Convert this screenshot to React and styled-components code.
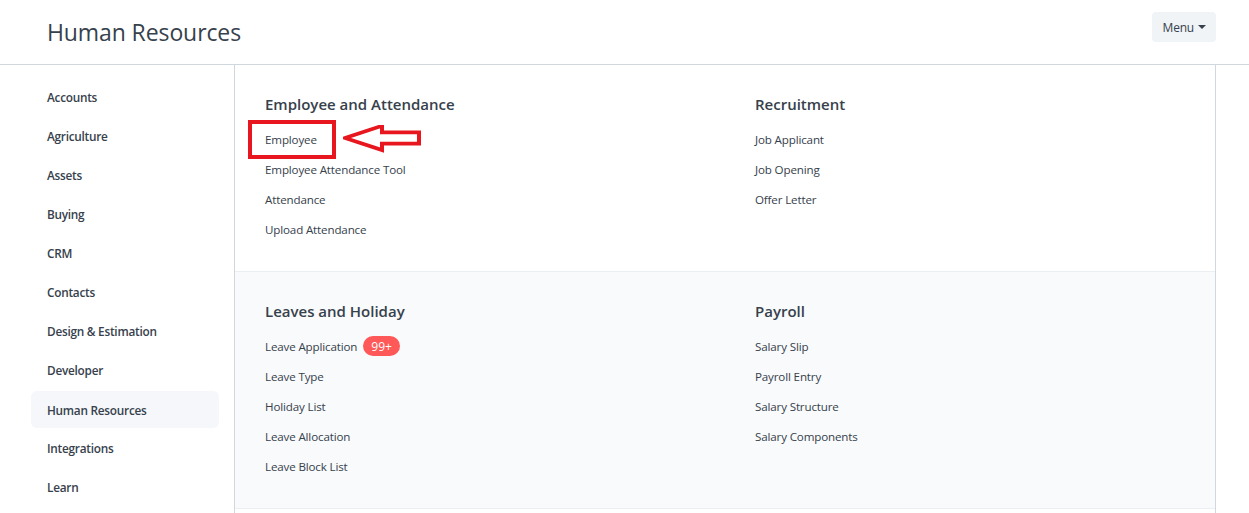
import React from "react";
import styled, { createGlobalStyle } from "styled-components";

const Global = createGlobalStyle`
  html, body { margin: 0; padding: 0; background: #fff; }
  body { font-family: "Open Sans", "Noto Sans", sans-serif; color: #36414c; }
  * { box-sizing: border-box; }
`;

const Page = styled.div`
  width: 1249px;
  height: 513px;
  overflow: hidden;
`;

const Header = styled.header`
  height: 65px;
  border-bottom: 1px solid #d1d8dd;
  padding: 0 33px 0 47px;
  display: flex;
  align-items: center;
  justify-content: space-between;
`;

const Title = styled.h1`
  margin: 0;
  font-size: 23px;
  font-weight: 500;
  color: #36414c;
  letter-spacing: -0.1px;
`;

const MenuButton = styled.button`
  height: 30px;
  padding: 0 10px 0 11px;
  border: none;
  border-radius: 4px;
  background: #f0f4f7;
  color: #36414c;
  font-family: inherit;
  font-size: 12px;
  letter-spacing: -0.2px;
  display: flex;
  align-items: center;
  gap: 4px;
  margin-top: -10px;
`;

const Caret = styled.span`
  width: 0;
  height: 0;
  border-left: 4px solid transparent;
  border-right: 4px solid transparent;
  border-top: 4px solid #36414c;
`;

const Body = styled.div`
  display: flex;
  padding-left: 31px;
  gap: 15px;
`;

const Sidebar = styled.nav`
  width: 188px;
  padding-top: 13px;
  display: flex;
  flex-direction: column;
  gap: 2px;
`;

const SideItem = styled.div`
  height: 37px;
  padding-left: 16px;
  display: flex;
  align-items: center;
  font-size: 11.8px;
  letter-spacing: -0.25px;
  font-weight: 600;
  color: #36414c;
  border-radius: 6px;
  background: ${(p) => (p.$active ? "#f5f7fa" : "transparent")};
  margin-top: ${(p) => (p.$active ? "1px" : "0")};
  margin-bottom: ${(p) => (p.$active ? "-1px" : "0")};
`;

const Panel = styled.main`
  width: 982px;
  border-left: 1px solid #d1d8dd;
  border-right: 1px solid #d1d8dd;
  min-height: 460px;
`;

const Section = styled.section`
  display: grid;
  grid-template-columns: 490px 1fr;
  padding: 29px 30px 32px 30px;
  background: ${(p) => (p.$shaded ? "#f9fafb" : "#fff")};
  border-bottom: 1px solid #ebeff2;
`;

const Column = styled.div`
  display: flex;
  flex-direction: column;
`;

const Heading = styled.h3`
  margin: 0 0 15px;
  font-size: 15px;
  line-height: 20px;
  font-weight: 600;
  color: #36414c;
`;

const LinkRow = styled.div`
  position: relative;
  height: 20px;
  margin-bottom: 10px;
  display: flex;
  align-items: center;
  gap: 6px;
  font-size: 11.6px;
  letter-spacing: -0.15px;
  color: #36414c;
  &:last-child { margin-bottom: 0; }
`;

const Badge = styled.span`
  height: 20px;
  padding: 0 8px;
  border-radius: 10px;
  background: #ff5858;
  color: #fff;
  font-size: 12px;
  letter-spacing: 0;
  display: inline-flex;
  align-items: center;
`;

const Highlight = styled.span`
  position: absolute;
  left: -17px;
  top: -9px;
  width: 88px;
  height: 39px;
  border: 4px solid #e8161e;
`;

const Arrow = styled.svg`
  position: absolute;
  left: 78px;
  top: -4px;
`;

const sidebar = [
  "Accounts",
  "Agriculture",
  "Assets",
  "Buying",
  "CRM",
  "Contacts",
  "Design & Estimation",
  "Developer",
  "Human Resources",
  "Integrations",
  "Learn",
];

const sections = [
  [
    {
      title: "Employee and Attendance",
      links: ["Employee", "Employee Attendance Tool", "Attendance", "Upload Attendance"],
    },
    { title: "Recruitment", links: ["Job Applicant", "Job Opening", "Offer Letter"] },
  ],
  [
    {
      title: "Leaves and Holiday",
      links: ["Leave Application", "Leave Type", "Holiday List", "Leave Allocation", "Leave Block List"],
    },
    {
      title: "Payroll",
      links: ["Salary Slip", "Payroll Entry", "Salary Structure", "Salary Components"],
    },
  ],
];

function Link({ name }) {
  return (
    <LinkRow>
      {name}
      {name === "Leave Application" && <Badge>99+</Badge>}
      {name === "Employee" && (
        <>
          <Highlight />
          <Arrow width="80" height="28" viewBox="0 0 80 28">
            <polygon
              points="2,15 39,2 39,9 76,9 76,21 39,21 39,28"
              fill="none"
              stroke="#e8161e"
              strokeWidth="4"
              strokeLinejoin="miter"
              transform="translate(0,-1) scale(1,0.93)"
            />
          </Arrow>
        </>
      )}
    </LinkRow>
  );
}

export default function App() {
  return (
    <Page>
      <Global />
      <Header>
        <Title>Human Resources</Title>
        <MenuButton>
          Menu <Caret />
        </MenuButton>
      </Header>
      <Body>
        <Sidebar>
          {sidebar.map((s) => (
            <SideItem key={s} $active={s === "Human Resources"}>
              {s}
            </SideItem>
          ))}
        </Sidebar>
        <Panel>
          {sections.map((cols, i) => (
            <Section key={i} $shaded={i === 1}>
              {cols.map((c) => (
                <Column key={c.title}>
                  <Heading>{c.title}</Heading>
                  {c.links.map((l) => (
                    <Link key={l} name={l} />
                  ))}
                </Column>
              ))}
            </Section>
          ))}
        </Panel>
      </Body>
    </Page>
  );
}
